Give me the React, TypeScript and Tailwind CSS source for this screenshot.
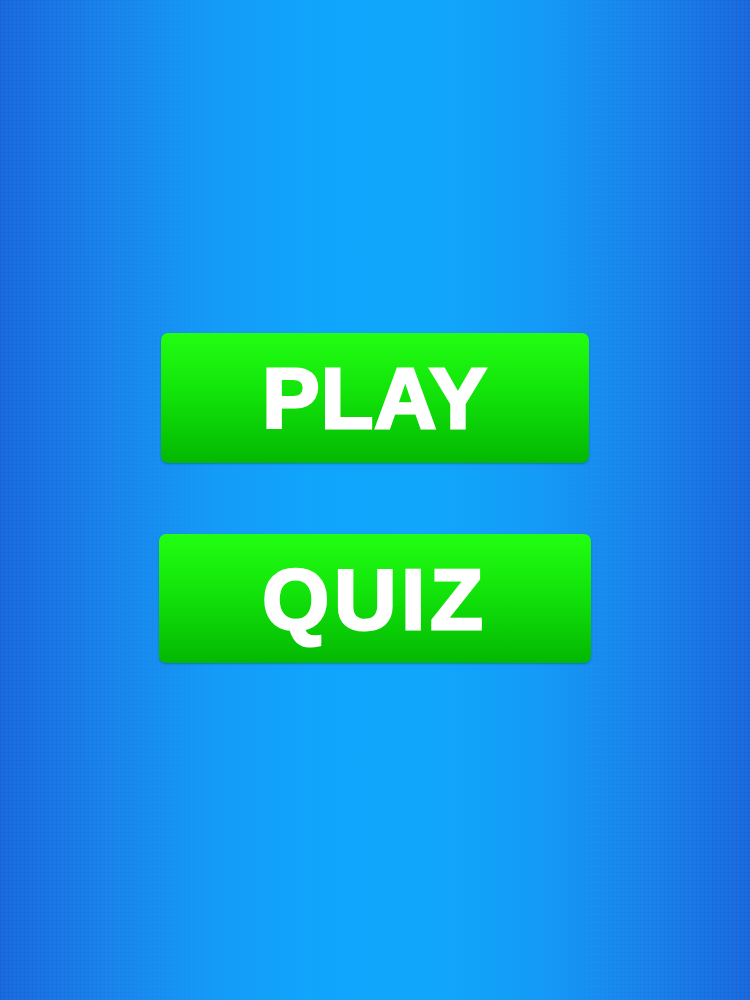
export default function App() {
  const btn =
    "flex items-center justify-center rounded-[7px] bg-[linear-gradient(to_bottom,#22ff12_0%,#12e40a_45%,#03b802_100%)] shadow-[0_1px_2px_rgba(0,40,120,0.35)] text-white font-bold text-[86px] leading-none [font-family:'Liberation_Sans',Arial,sans-serif] [-webkit-text-stroke:3px_white] [paint-order:stroke_fill]";
  return (
    <div className="relative w-full h-[1000px] overflow-hidden bg-[linear-gradient(to_right,#1b6be0_0%,#1a84ec_14%,#149bf7_28%,#10a5fc_42%,#10a6fc_58%,#149bf7_72%,#1a84ec_86%,#1b6be0_100%)]">
      <div className="absolute inset-0 opacity-25 bg-[repeating-linear-gradient(to_right,rgba(0,30,120,0.25)_0px,rgba(0,30,120,0.25)_1px,transparent_1px,transparent_4px),repeating-linear-gradient(to_bottom,rgba(0,30,120,0.25)_0px,rgba(0,30,120,0.25)_1px,transparent_1px,transparent_4px)] [mask-image:linear-gradient(to_right,black_0%,transparent_30%,transparent_70%,black_100%)]" />
      <div className="relative flex flex-col items-center pt-[333px] gap-[71px]">
        <button className={`${btn} w-[428px] h-[130px] tracking-[1px]`}>PLAY</button>
        <button className={`${btn} w-[432px] h-[129px] tracking-[5px]`}>QUIZ</button>
      </div>
    </div>
  );
}
